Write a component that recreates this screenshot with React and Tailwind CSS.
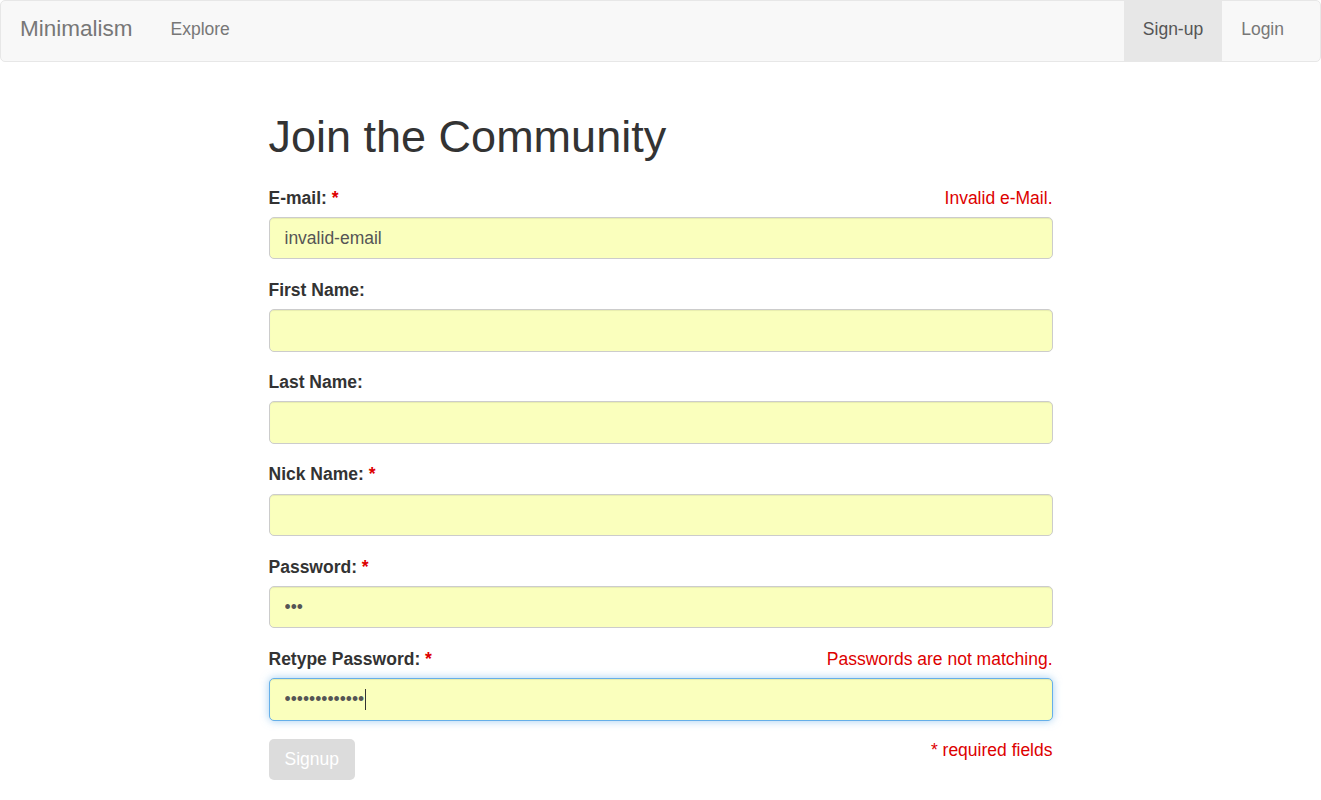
function Field({ label, required, error, value, type = "text", focused }) {
  return (
    <div className="mb-[18.5px]">
      <div className="flex justify-between items-center mb-[6.25px] h-[25px]">
        <label className="font-bold text-[#333]">
          {label}
          {required && <span className="text-[#d00]"> *</span>}
        </label>
        {error && <span className="text-[#d00]">{error}</span>}
      </div>
      <div className="relative">
        <input
          type={type}
          readOnly
          value={value}
          className={
            focused
              ? "w-full h-[42.5px] px-[15px] rounded-[5px] bg-[#faffbd] text-[#555] border border-[#66afe9] outline-none shadow-[inset_0_1px_1px_rgba(0,0,0,0.075),0_0_8px_rgba(102,175,233,0.6)]"
              : "w-full h-[42.5px] px-[15px] rounded-[5px] bg-[#faffbd] text-[#555] border border-[#ccc] outline-none shadow-[inset_0_1px_1px_rgba(0,0,0,0.075)]"
          }
        />
        {focused && (
          <span className="absolute left-[96px] top-[11px] w-px h-[21px] bg-[#333]" />
        )}
      </div>
    </div>
  );
}

export default function App() {
  return (
    <div className="min-h-screen bg-white text-[17.5px] leading-[1.42857] font-['Liberation_Sans',Arial,sans-serif]">
      <nav className="h-[62px] pb-[3px] bg-[#f8f8f8] border border-[#e7e7e7] rounded-[5px] flex justify-between">
        <div className="flex items-stretch">
          <a className="px-[19px] flex items-center text-[22.5px] text-[#777]">Minimalism</a>
          <a className="px-[19px] flex items-center text-[#777]">Explore</a>
        </div>
        <div className="flex items-stretch mr-[17px] -mb-[3px]">
          <a className="px-[19px] pb-[3px] flex items-center text-[#555] bg-[#e7e7e7]">Sign-up</a>
          <a className="px-[19px] pb-[3px] flex items-center text-[#777]">Login</a>
        </div>
      </nav>

      <div className="w-[784px] mx-auto">
        <h1 className="mt-[50px] mb-[24px] text-[45px] leading-[1.1] text-[#333]">
          Join the Community
        </h1>
        <form>
          <Field label="E-mail:" required error="Invalid e-Mail." value="invalid-email" />
          <Field label="First Name:" value="" />
          <Field label="Last Name:" value="" />
          <Field label="Nick Name:" required value="" />
          <Field label="Password:" required type="password" value="abc" />
          <Field
            label="Retype Password:"
            required
            error="Passwords are not matching."
            type="password"
            value="abcdefghijklm"
            focused
          />
          <div className="flex justify-between items-start">
            <button
              type="button"
              disabled
              className="h-[41px] px-[16px] rounded-[5px] bg-[#dcdcdc] text-white"
            >
              Signup
            </button>
            <span className="text-[#d00] mt-[-1px]">* required fields</span>
          </div>
        </form>
      </div>
    </div>
  );
}
